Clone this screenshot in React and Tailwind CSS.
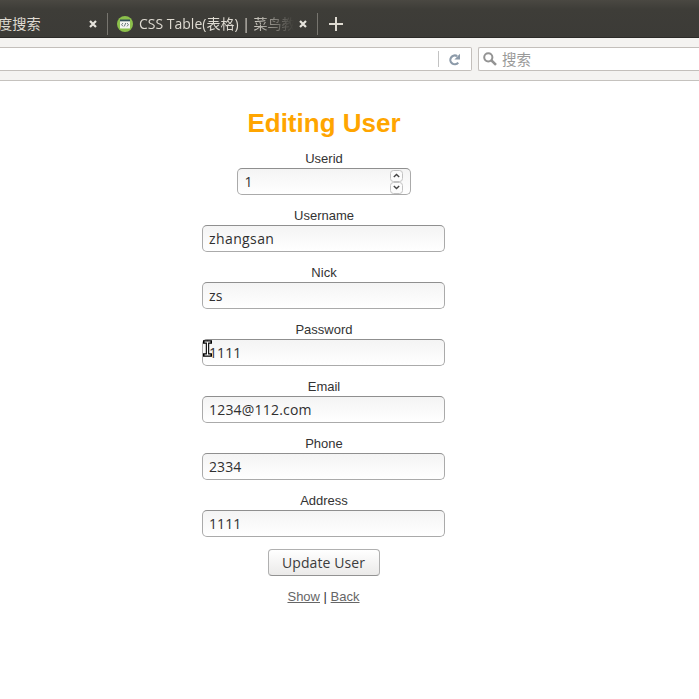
import React from "react";

const FIELDS = [
  { label: "Userid", value: "1", number: true },
  { label: "Username", value: "zhangsan", tracking: "tracking-[0.4px]" },
  { label: "Nick", value: "zs", tracking: "tracking-[0.3px]" },
  { label: "Password", value: "1111", cursor: true, tracking: "tracking-[0.1px]" },
  { label: "Email", value: "1234@112.com", tracking: "tracking-[0.2px]" },
  { label: "Phone", value: "2334", tracking: "tracking-[0.1px]" },
  { label: "Address", value: "1111", tracking: "tracking-[0.1px]" },
];

function CloseIcon() {
  return (
    <svg width="8" height="8" viewBox="0 0 8 8" className="shrink-0">
      <path d="M1 1L7 7M7 1L1 7" stroke="#e6e3dc" strokeWidth="2.2" />
    </svg>
  );
}

function SiteIcon() {
  return (
    <svg width="16" height="16" viewBox="0 0 16 16" className="shrink-0">
      <circle cx="8" cy="8" r="8" fill="#8cc04b" />
      <rect x="3" y="4" width="10" height="8.5" rx="0.6" fill="#f4f5f2" />
      <rect x="3" y="3.5" width="10" height="1.8" fill="#34505a" />
      <path d="M6 7L4.6 8.7L6 10.4M10 7L11.4 8.7L10 10.4M8.7 7L7.3 10.4" stroke="#5c6c72" strokeWidth="0.9" fill="none" />
    </svg>
  );
}

function TabBar() {
  return (
    <header className="flex h-[38px] items-start overflow-hidden border-b border-[#2b2a27] bg-linear-to-b from-[#4a4842] via-[#3e3d38] via-25% to-[#3c3b37] pt-[13px] text-[14px] text-[#dfdbd2]">
      <div className="flex h-[22px] w-[107px] items-center justify-between pr-[10px]">
        <span className="-ml-[2px] text-[14.2px] leading-[22px]">度搜索</span>
        <CloseIcon />
      </div>
      <div className="flex h-[22px] w-[210px] items-center border-l border-[#77756f] pl-[9px]">
        <SiteIcon />
        <span className="ml-[6px] w-[155px] overflow-hidden whitespace-nowrap text-[14px] leading-[24px] mask-r-from-72% mask-r-to-100%">
          CSS Table(表格) | 菜鸟教
        </span>
        <span className="ml-[5px] flex">
          <CloseIcon />
        </span>
      </div>
      <div className="flex h-[22px] items-center border-l border-[#77756f] pl-[11px]">
        <svg width="14" height="14" viewBox="0 0 14 14">
          <path d="M7 0V14M0 7H14" stroke="#dfdbd2" strokeWidth="2" />
        </svg>
      </div>
    </header>
  );
}

function Toolbar() {
  return (
    <div className="flex h-[43px] gap-[6px] border-b border-[#c5c2be] bg-[#f4f3f1] pt-[9px]">
      <div className="flex h-[24px] w-[472px] items-center justify-end rounded-r-[2px] border border-l-0 border-[#c3bfbb] bg-white">
        <div className="flex h-4 w-[33px] items-center border-l border-[#c3c3c3] pl-[9px]">
          <svg width="14" height="14" viewBox="0 0 14 14" className="mt-px">
            <path d="M10.2 9.6A4.4 4.4 0 1 1 9.2 3.2" stroke="#8c9aa9" strokeWidth="2.2" fill="none" />
            <path d="M12 0.8V6.4H6.4Z" fill="#8c9aa9" />
          </svg>
        </div>
      </div>
      <div className="flex h-[24px] flex-1 items-center rounded-l-[2px] border border-r-0 border-[#c3bfbb] bg-white pl-[4px] text-[14.5px] text-[#999]">
        <svg width="14" height="14" viewBox="0 0 14 14" className="mr-[5px] -mt-px">
          <circle cx="5.3" cy="5.3" r="4.1" stroke="#939393" strokeWidth="2" fill="none" />
          <path d="M8.5 8.5L13 12.8" stroke="#939393" strokeWidth="2.5" />
        </svg>
        <span className="mt-px">搜索</span>
      </div>
    </div>
  );
}

function Spinner() {
  return (
    <span className="flex flex-col pr-[7px] pt-px">
      {["M3.8 7L6.5 4.5L9.2 7", "M3.8 4L6.5 6.5L9.2 4"].map((d) => (
        <svg key={d} width="13" height="12" viewBox="0 0 13 12">
          <rect x="0.5" y="0.5" width="12" height="11" rx="3" fill="#fcfcfc" stroke="#c2c2c2" />
          <path d={d} stroke="#444" strokeWidth="1.4" fill="none" />
        </svg>
      ))}
    </span>
  );
}

function IBeam() {
  return (
    <svg width="9" height="17" viewBox="0 0 9 17" className="absolute left-0 top-0">
      <path d="M1.5 2H3.5L4.5 3L5.5 2H7.5M4.5 3V14M1.5 15H3.5L4.5 14L5.5 15H7.5" stroke="#000" strokeWidth="3.4" strokeLinecap="square" fill="none" />
      <path d="M1.5 2H7.5M4.5 2V15M1.5 15H7.5" stroke="#fff" strokeWidth="1.2" fill="none" />
    </svg>
  );
}

function Field({ label, value, number, cursor, tracking = "" }) {
  return (
    <div className="flex h-[57px] w-full flex-col items-center">
      <label className="h-[18px] pl-px text-[13px] leading-[18px]">{label}</label>
      <div
        className={`${number ? "w-[174px] pl-[7px]" : "w-[243px] pl-[6px]"} relative flex h-[27px] items-center justify-between rounded-[5px] border border-[#aaa] border-t-[#8f8f8f] bg-linear-to-b from-[#f4f4f4] to-white font-['Open_Sans','Noto_Sans',sans-serif] text-[14px] text-[#303030]`}
      >
        <span className={`${tracking} leading-[25px]`}>{value}</span>
        {number && <Spinner />}
        {cursor && <IBeam />}
      </div>
    </div>
  );
}

export default function App() {
  return (
    <div className="h-[699px] w-[699px] overflow-hidden bg-white font-['Open_Sans','Noto_Sans_CJK_SC',sans-serif]">
      <TabBar />
      <Toolbar />
      <main className="ml-[202px] flex w-[243px] flex-col items-center pt-[26px] font-['Liberation_Sans',Arial,sans-serif] text-[#333]">
        <h1 className="h-[43px] pl-px text-[26px] font-bold leading-[32px] text-[#ffa500]">Editing User</h1>
        {FIELDS.map((field) => (
          <Field key={field.label} {...field} />
        ))}
        <button className="h-[27px] w-[112px] rounded-[4px] border border-[#b0b0b0] border-b-[#929292] bg-linear-to-b from-white to-[#ebeae9] font-['Open_Sans','Noto_Sans',sans-serif] text-[14px] leading-[25px] tracking-[0.1px] text-[#3c3c3c]">
          Update User
        </button>
        <p className="mt-[12px] text-[13px] leading-[18px]">
          <a className="text-[#666] underline">Show</a> | <a className="text-[#666] underline">Back</a>
        </p>
      </main>
    </div>
  );
}
